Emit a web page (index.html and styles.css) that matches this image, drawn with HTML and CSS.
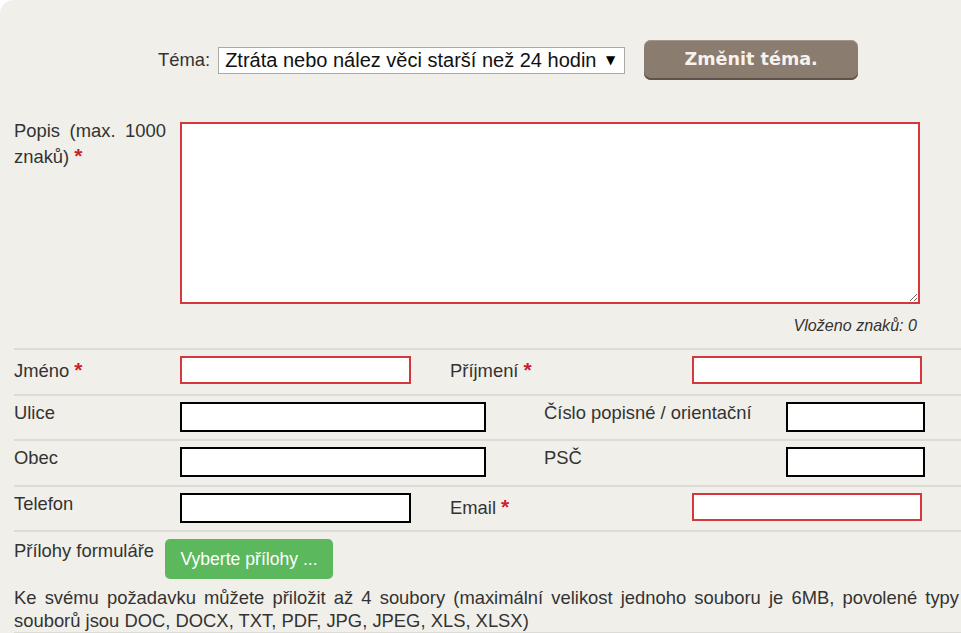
FILE: index.html
```html
<!DOCTYPE html>
<html lang="cs">
<head>
<meta charset="utf-8">
<title>Formulář</title>
<link rel="stylesheet" href="styles.css">
</head>
<body>
<div class="page">
  <div class="topic-row">
    <label class="topic-label" for="tema">Téma:</label>
    <span class="select-wrap">
      <select id="tema" class="topic-select">
        <option>Ztráta nebo nález věci starší než 24 hodin</option>
      </select>
    </span>
    <button class="btn-change" type="button">Změnit téma.</button>
  </div>

  <div class="desc-row">
    <label class="desc-label">Popis (max. 1000 znaků) <span class="req">*</span></label>
    <div class="desc-field">
      <textarea class="desc-input"></textarea>
      <div class="counter">Vloženo znaků: 0</div>
    </div>
  </div>

  <div class="form-row">
    <label class="label-first">Jméno <span class="req">*</span></label>
    <input class="field field-req w-mid" type="text">
    <label class="label-second gap-a">Příjmení <span class="req">*</span></label>
    <input class="field field-req w-mid2" type="text">
  </div>

  <div class="form-row">
    <label class="label-first">Ulice</label>
    <input class="field w-wide" type="text">
    <label class="label-second gap-b">Číslo popisné / orientační</label>
    <input class="field w-narrow" type="text">
  </div>

  <div class="form-row">
    <label class="label-first">Obec</label>
    <input class="field w-wide" type="text">
    <label class="label-second gap-b">PSČ</label>
    <input class="field w-narrow" type="text">
  </div>

  <div class="form-row">
    <label class="label-first">Telefon</label>
    <input class="field w-mid" type="text">
    <label class="label-second gap-a">Email <span class="req">*</span></label>
    <input class="field field-req w-mid2" type="text">
  </div>

  <div class="attach-row">
    <div class="attach-line">
      <span class="attach-label">Přílohy formuláře</span>
      <button class="btn-attach" type="button">Vyberte přílohy ...</button>
    </div>
    <p class="attach-note">Ke svému požadavku můžete přiložit až 4 soubory (maximální velikost jednoho souboru je 6MB, povolené typy souborů jsou DOC, DOCX, TXT, PDF, JPG, JPEG, XLS, XLSX)</p>
  </div>
</div>
</body>
</html>
```

FILE: styles.css
```css
* {
  box-sizing: border-box;
}

html, body {
  margin: 0;
  background: #ffffff;
}

body {
  font-family: "Liberation Sans", Arial, sans-serif;
  font-size: 18.4px;
  color: #333333;
}

.page {
  background: #f1efea;
  border-top-left-radius: 14px;
  min-height: 633px;
  padding-left: 14px;
  overflow: hidden;
}

/* Topic row */
.topic-row {
  display: flex;
  align-items: center;
  padding-top: 40px;
  padding-left: 144px;
  height: 80px;
}

.topic-label {
  margin-right: 8px;
  line-height: 22px;
}

.select-wrap {
  position: relative;
  display: block;
  width: 407px;
  height: 27px;
}

.select-wrap::after {
  content: "▼";
  position: absolute;
  right: 10px;
  top: 6px;
  font-family: "DejaVu Sans", sans-serif;
  font-size: 12px;
  line-height: 14px;
  color: #000;
  pointer-events: none;
}

.topic-select {
  appearance: none;
  -webkit-appearance: none;
  width: 100%;
  height: 27px;
  margin: 0;
  padding: 0 6px;
  border: 1px solid #a9a9a9;
  border-radius: 0;
  background: #ffffff;
  font-family: "Liberation Sans", Arial, sans-serif;
  font-size: 20px;
  color: #111;
}

.btn-change {
  margin-left: 19px;
  width: 214px;
  height: 40px;
  border: 0;
  border-radius: 7px;
  background: #8b7c70;
  box-shadow: inset 0 -2px 0 #5f5249, inset 0 1px 0 #a39589;
  color: #f6f2ec;
  font-family: "DejaVu Sans", Verdana, sans-serif;
  font-weight: bold;
  font-size: 17.6px;
  padding: 0 0 2px;
}

/* Description */
.desc-row {
  display: flex;
  margin-top: 42px;
  margin-bottom: 13px;
}

.desc-label {
  width: 152px;
  margin-right: 14px;
  text-align: justify;
  line-height: 22px;
  margin-top: -2px;
}

.desc-field {
  width: 740px;
}

.desc-input {
  display: block;
  width: 740px;
  height: 182px;
  margin: 0;
  border: 2px solid #d6373c;
  background: #ffffff;
  resize: both;
}

.counter {
  margin-top: 11px;
  line-height: 20px;
  font-size: 16.1px;
  font-style: italic;
  text-align: right;
  padding-right: 3px;
}

.req {
  color: #cc1f2a;
  font-weight: bold;
  font-size: 21px;
  line-height: 28px;
}

/* Form rows */
.form-row {
  display: flex;
  align-items: flex-start;
  height: 45.5px;
  border-top: 2px solid #dddbd6;
}

.label-first {
  width: 166px;
  padding-top: 6px;
  line-height: 22px;
}

.label-second {
  width: 242px;
  padding-top: 6px;
  line-height: 22px;
}

.gap-a {
  margin-left: 39px;
}

.gap-b {
  margin-left: 58px;
}

.field {
  margin: 6px 0 0;
  height: 30px;
  padding: 0 4px;
  border: 2px solid #000000;
  background: #ffffff;
  font-family: "Liberation Sans", Arial, sans-serif;
  font-size: 16px;
  border-radius: 0;
  outline: none;
}

.field-req {
  border-color: #d6373c;
  height: 28px;
}

.w-mid {
  width: 231px;
}

.w-mid2 {
  width: 230px;
}

.w-wide {
  width: 306px;
}

.w-narrow {
  width: 139px;
}

/* Attachments */
.attach-row {
  border-top: 2px solid #dddbd6;
  border-bottom: 2px solid #dddbd6;
  padding-top: 7px;
}

.attach-line {
  display: flex;
  align-items: flex-start;
}

.attach-label {
  line-height: 22px;
  margin-top: 1px;
}

.btn-attach {
  margin-left: 11px;
  width: 168px;
  height: 40px;
  border: 0;
  border-radius: 5px;
  background: #5cb85c;
  color: #ffffff;
  font-family: "Liberation Sans", Arial, sans-serif;
  font-size: 17.6px;
  padding: 0;
}

.attach-note {
  margin: 7px 0 0;
  padding-right: 2px;
  line-height: 23px;
  text-align: justify;
}
```
